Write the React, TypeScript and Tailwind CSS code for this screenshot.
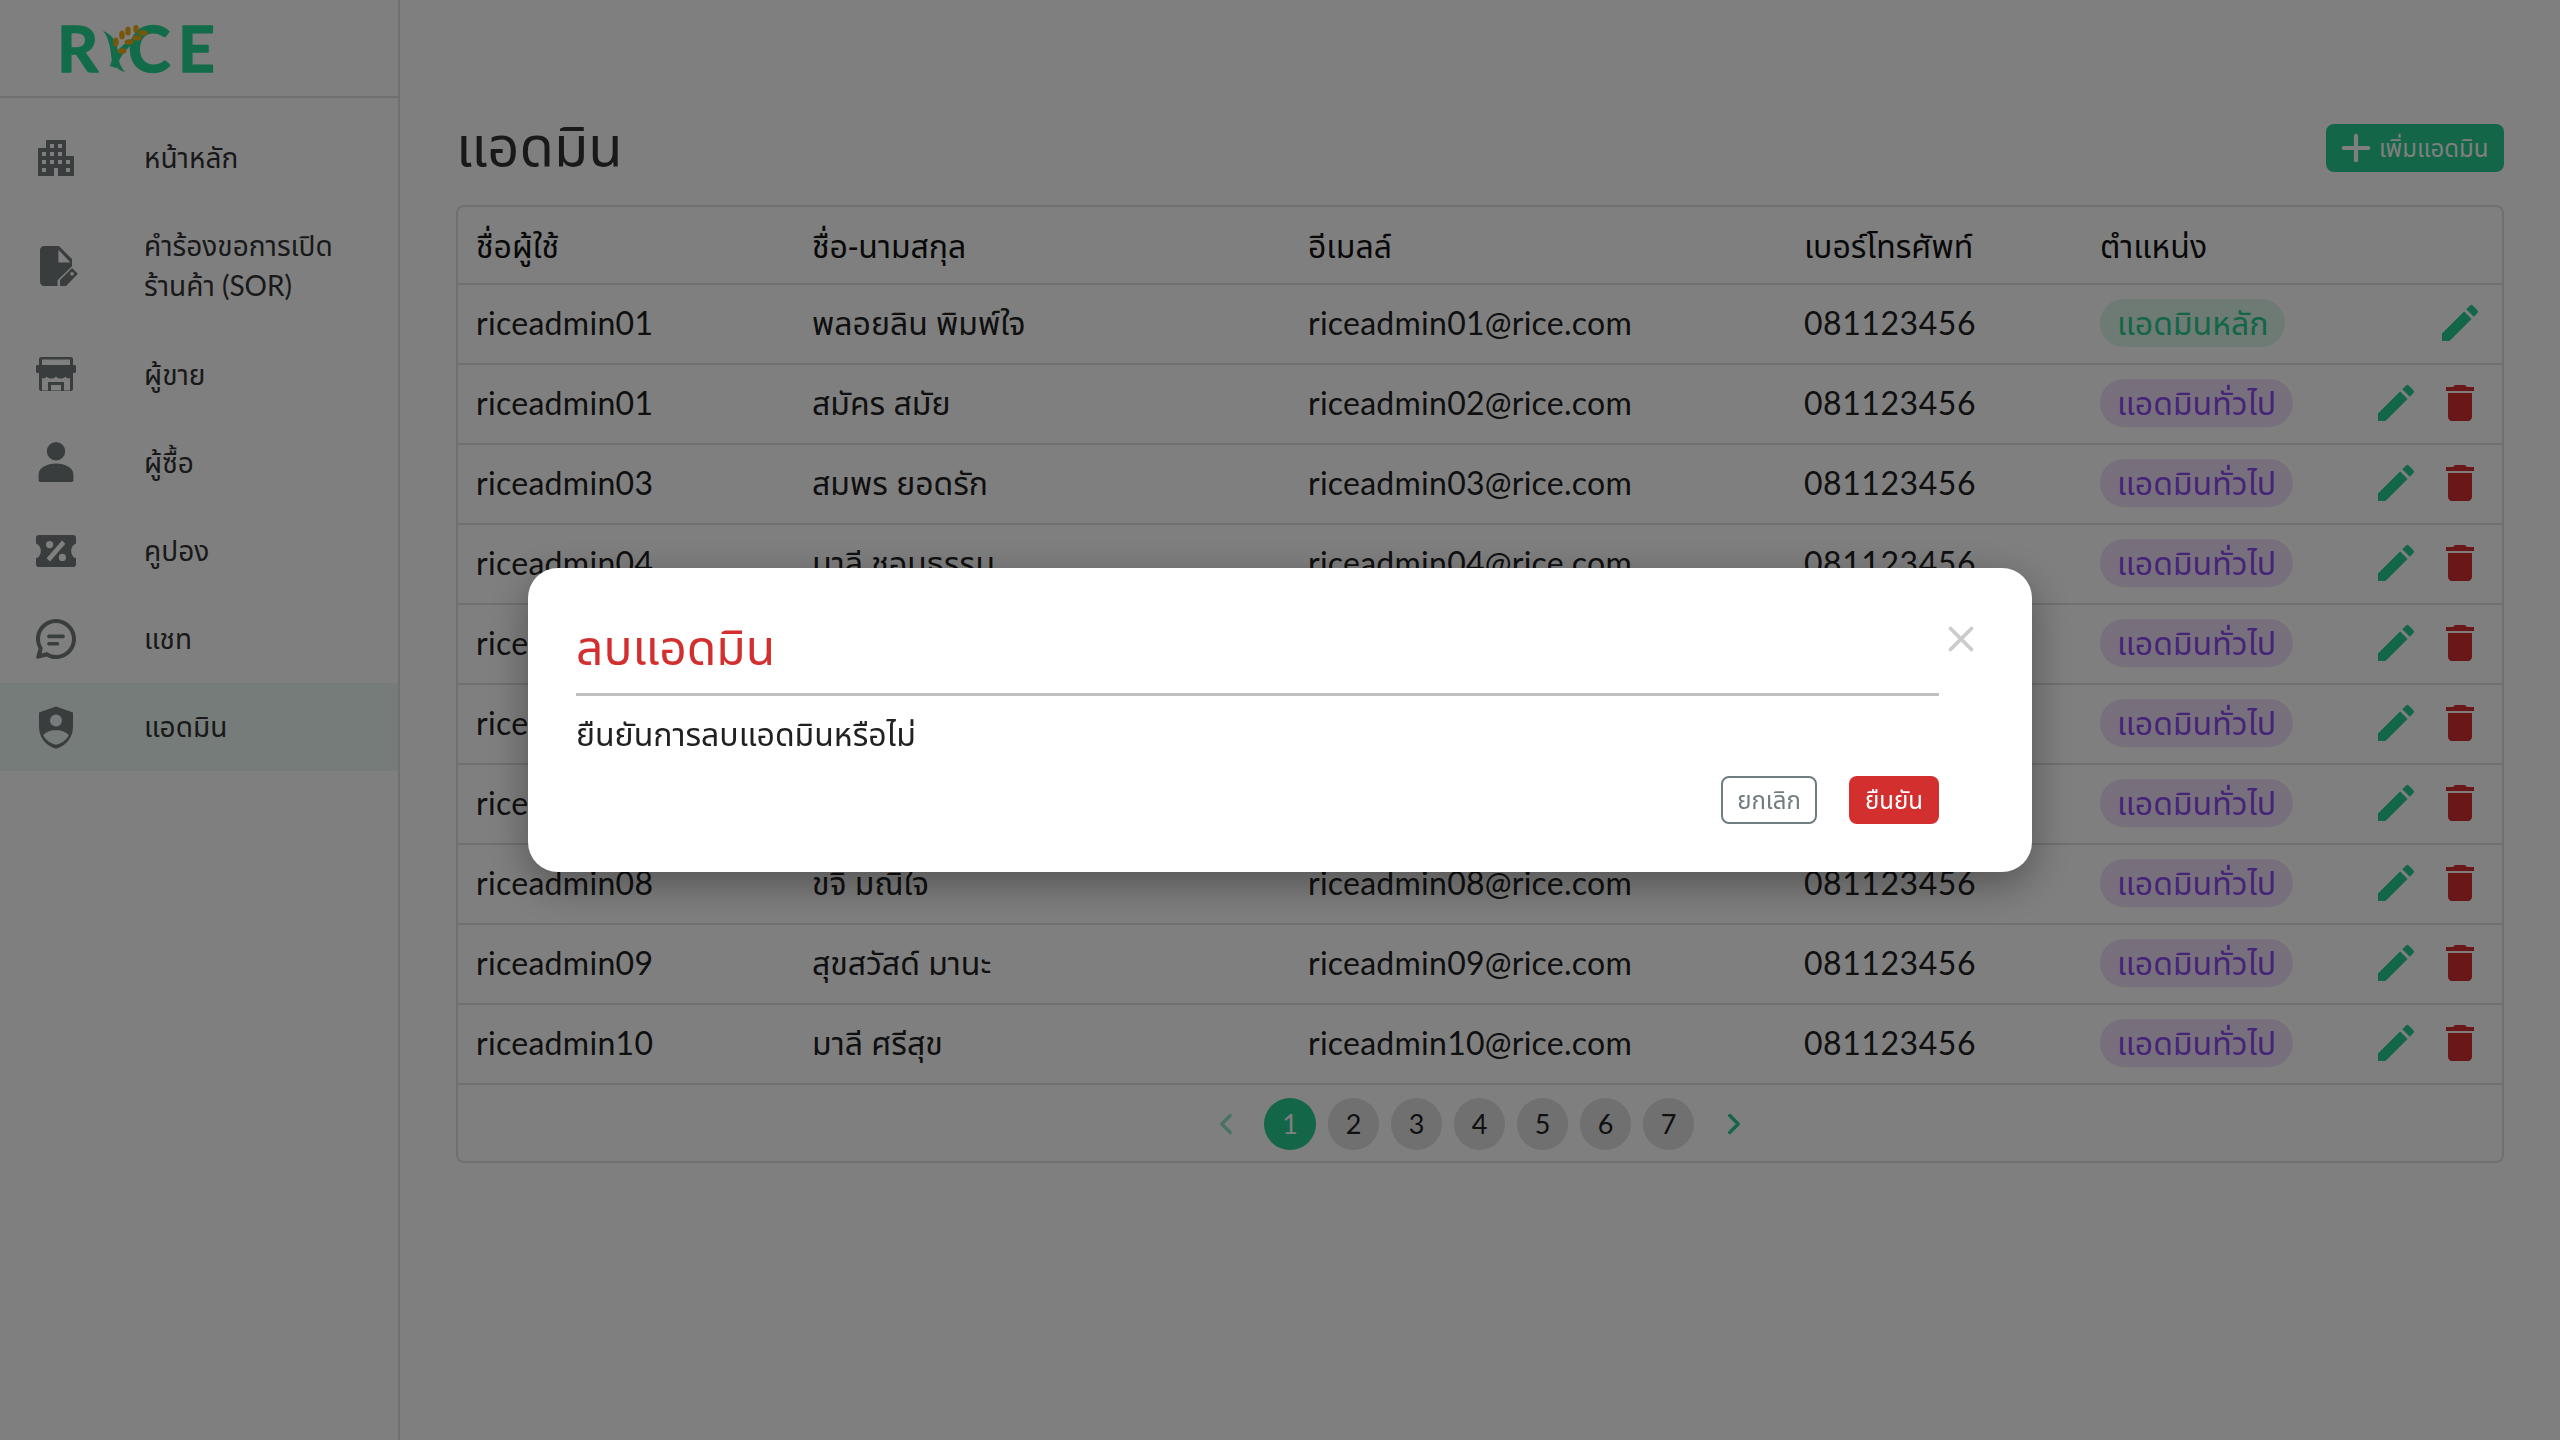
import { Plus, X, ChevronLeft, ChevronRight } from 'lucide-react';

const admins = [
  { user: 'riceadmin01', name: 'พลอยลิน พิมพ์ใจ', email: 'riceadmin01@rice.com', main: true },
  { user: 'riceadmin01', name: 'สมัคร สมัย', email: 'riceadmin02@rice.com' },
  { user: 'riceadmin03', name: 'สมพร ยอดรัก', email: 'riceadmin03@rice.com' },
  { user: 'riceadmin04', name: 'มาลี ชอบธรรม', email: 'riceadmin04@rice.com' },
  { user: 'riceadmin05', name: 'สมชาย ใจดี', email: 'riceadmin05@rice.com' },
  { user: 'riceadmin06', name: 'สมศรี มีสุข', email: 'riceadmin06@rice.com' },
  { user: 'riceadmin07', name: 'วิชัย ยอดดี', email: 'riceadmin07@rice.com' },
  { user: 'riceadmin08', name: 'ขจิ มณิใจ', email: 'riceadmin08@rice.com' },
  { user: 'riceadmin09', name: 'สุขสวัสด์ มานะ', email: 'riceadmin09@rice.com' },
  { user: 'riceadmin10', name: 'มาลี ศรีสุข', email: 'riceadmin10@rice.com' },
];

function Logo() {
  return (
    <svg width="170" height="80" viewBox="0 -14 170 80" className="block">
      <g fontFamily="Lato, sans-serif" fontWeight="700" fontSize="64" fill="#26d892" stroke="#26d892" strokeWidth="1.500" strokeLinejoin="round">
        <text x="1" y="52">R</text>
        <text x="72" y="52">C</text>
        <text x="122" y="52">E</text>
      </g>
      <path d="M47 11C56 14 61 22 62 32c0 8 2 14 7 20-9-2-14-10-14-18-1-9-3-17-8-23z" fill="#26d892" />
      <path d="M54 46C58 30 72 18 92 12 78 22 66 30 60 48z" fill="#26d892" />
      <g fill="#f0ac14">
        <ellipse cx="60" cy="22" rx="2.800" ry="4.500" />
        <ellipse cx="66" cy="15" rx="2.800" ry="4.500" />
        <ellipse cx="72" cy="11" rx="2.800" ry="4.500" />
        <ellipse cx="80" cy="9" rx="2.800" ry="4" />
        <ellipse cx="87" cy="13" rx="4.500" ry="2.800" />
        <ellipse cx="81" cy="18" rx="4.500" ry="2.800" />
        <ellipse cx="73" cy="22" rx="4.500" ry="2.800" />
        <ellipse cx="66" cy="31" rx="4.500" ry="2.800" />
      </g>
    </svg>
  );
}

function MuiIcon({ d, className }: { d: string; className?: string }) {
  return (
    <svg viewBox="0 0 24 24" className={className} fill="currentColor" fillRule="evenodd">
      <path d={d} />
    </svg>
  );
}

const icons = {
  home: 'M17 11V3H7v4H3v14h8v-4h2v4h8V11h-4zM7 19H5v-2h2v2zm0-4H5v-2h2v2zm0-4H5V9h2v2zm4 4H9v-2h2v2zm0-4H9V9h2v2zm0-4H9V5h2v2zm4 8h-2v-2h2v2zm0-4h-2V9h2v2zm0-4h-2V5h2v2zm4 12h-2v-2h2v2zm0-4h-2v-2h2v2z',
  note: 'M6 1.500h7.500L20 8v3.600l-7.200 7V21.500H6c-1.100 0-2-.9-2-2v-16c0-1.100.9-2 2-2zM13.200 3.400V9.800h6zM14 18.500l5.500-5.500c.3-.3.700-.3 1 0l2 1.900c.3.3.3.700 0 1L17 21.500h-2.500c-.3 0-.5-.2-.5-.5zM20 14.500a.9.9 0 1 0 .01 0z',
  store: 'M4.500 3h15c.5 0 1 .5 1 1v3h.8c.4 0 .7.300.7.700v2.600c0 .4-.3.700-.7.700h-.8v8c0 .5-.5 1-1 1h-15c-.5 0-1-.5-1-1v-8h-.8c-.4 0-.7-.3-.7-.7V7.700c0-.4.300-.7.700-.7h.8V4c0-.5.5-1 1-1zM5 4.300V7h14V4.300zM5 13.500V19.700h3v-4.200h8v4.200h3V13.500c-1.200.300-2-.2-2.300-.8-.5.8-1.500 1-2.300 1-1 0-1.800-.3-2.400-1-.6.700-1.400 1-2.400 1-.8 0-1.800-.2-2.300-1-.3.600-1.100 1.100-2.300.8zM9.500 17v2.700h5V17z',
  person: 'M12 1.500a4.600 4.600 0 1 0 0 9.200 4.600 4.600 0 0 0 0-9.200zM12 12.300c-4.500 0-8.700 2-8.700 5.500v3c0 .4.300.7.7.7h16c.4 0 .7-.3.7-.7v-3c0-3.500-4.200-5.500-8.700-5.500z',
  coupon: 'M3.300 4h17.400c.7 0 1.300.6 1.300 1.300v3.100c-1.600.4-2.400 1.900-2.400 3.600s.8 3.200 2.400 3.600v3.100c0 .7-.6 1.300-1.300 1.300H3.300C2.600 20 2 19.400 2 18.700v-3.100c1.600-.4 2.400-1.900 2.400-3.600S3.600 8.800 2 8.400V5.300C2 4.600 2.600 4 3.300 4zM15 6.700L7.300 15.600l1.700 1.700L16.700 8.400zM8.800 7a1.800 1.800 0 1 0 0 3.600 1.800 1.800 0 0 0 0-3.600zm6.400 6.400a1.800 1.800 0 1 0 0 3.600 1.800 1.800 0 0 0 0-3.600z',
  chat: 'M12 2c5.500 0 10 4.500 10 10s-4.500 10-10 10c-1.800 0-3.400-.5-4.800-1.300L3 21.900c-.6.100-1-.4-.9-1L3.300 16.800C2.500 15.400 2 13.800 2 12 2 6.500 6.500 2 12 2zm0 2c-4.400 0-8 3.600-8 8 0 1.700.5 3.200 1.400 4.500l-.6 2.700 2.700-.7C8.800 19.400 10.300 20 12 20c4.400 0 8-3.600 8-8s-3.600-8-8-8zM8.500 9.800h7c.5 0 .9.400.9.900s-.4.900-.9.900h-7c-.5 0-.9-.4-.9-.9s.4-.9.9-.9zm0 3.700h4.200c.5 0 .9.400.9.900s-.4.900-.9.900H8.500c-.5 0-.9-.4-.9-.9s.4-.9.900-.9z',
  shield: 'M12 1.700l8.500 3v7.300c0 5.300-3.600 9.600-8.500 10.900C7.100 21.600 3.500 17.300 3.500 12V4.700zM12 5.800a3 3 0 1 0 0 6 3 3 0 0 0 0-6zm0 7.800c-3 0-5.400 1-6.400 2.600C7 18.500 9.300 20.200 12 20.900c2.700-.7 5-2.400 6.400-4.700-1-1.600-3.400-2.600-6.400-2.600z',
  edit: 'M3 17.250V21h3.750L17.810 9.940l-3.750-3.750L3 17.250zM20.710 7.040c.39-.39.39-1.020 0-1.410l-2.340-2.340a.9959.9959 0 0 0-1.410 0l-1.830 1.830 3.750 3.750 1.830-1.830z',
  trash: 'M6 19c0 1.100.9 2 2 2h8c1.100 0 2-.9 2-2V7H6v12zM19 4h-3.500l-1-1h-5l-1 1H5v2h14V4z',
};

const navItems = [
  { icon: icons.home, label: 'หน้าหลัก' },
  { icon: icons.note, label: 'คำร้องขอการเปิด ร้านค้า', latin: ' (SOR)', tall: true },
  { icon: icons.store, label: 'ผู้ขาย' },
  { icon: icons.person, label: 'ผู้ซื้อ' },
  { icon: icons.coupon, label: 'คูปอง' },
  { icon: icons.chat, label: 'แชท' },
  { icon: icons.shield, label: 'แอดมิน', active: true },
];

function Sidebar() {
  return (
    <aside className="w-[400px] shrink-0 border-r-2 border-[#e0e0e0] bg-white">
      <div className="flex h-[98px] items-start border-b-2 border-[#e0e0e0] pl-[56px] pt-[6px]">
        <Logo />
      </div>
      <nav className="pt-[16px]">
        {navItems.map((item) => (
          <div
            key={item.label}
            className={`flex items-center pl-[32px] ${item.tall ? 'h-[129px]' : 'h-[88px]'} ${item.active ? 'bg-[#ecf8f4]' : ''}`}
          >
            <MuiIcon d={item.icon} className="h-[48px] w-[48px] shrink-0 text-[#747b7d]" />
            <span className="ml-[64px] w-[230px] pb-[3px] text-[28px] leading-[40px] text-[#333333]">
              {item.label}
              {item.latin && <span className="font-['Lato',sans-serif]">{item.latin}</span>}
            </span>
          </div>
        ))}
      </nav>
    </aside>
  );
}

function AdminRow({ admin }: { admin: (typeof admins)[number] }) {
  return (
    <div className="grid h-[80px] grid-cols-[336px_496px_496px_296px_1fr] items-center border-t-2 border-[#e0e0e0] pb-[2px] text-[32px] text-[#212121]">
      <div className="pl-[18px] font-['Lato',sans-serif] tracking-[0.3px]">{admin.user}</div>
      <div className="pl-[18px]">{admin.name}</div>
      <div className="pl-[18px] font-['Lato',sans-serif] tracking-[0.25px]">{admin.email}</div>
      <div className="pl-[18px] font-['Lato',sans-serif] tracking-[0.55px]">081123456</div>
      <div className="flex items-center justify-between pl-[18px] pr-[18px]">
        {admin.main ? (
          <span className="rounded-full bg-[#dcf5e9] px-[17px] py-[4px] leading-[40px] text-[#26cc8e]">แอดมินหลัก</span>
        ) : (
          <span className="rounded-full bg-[#f0dff8] px-[17px] py-[4px] leading-[40px] text-[#8c48f0]">แอดมินทั่วไป</span>
        )}
        <div className="flex items-center gap-[16px]">
          <MuiIcon d={icons.edit} className="h-[48px] w-[48px] text-[#26cc8e]" />
          {!admin.main && <MuiIcon d={icons.trash} className="h-[48px] w-[48px] text-[#d32f2f]" />}
        </div>
      </div>
    </div>
  );
}

function Pagination() {
  return (
    <div className="flex h-[78px] items-center justify-center border-t-2 border-[#e0e0e0] pt-[2px] font-['Lato',sans-serif]">
      <ChevronLeft className="mr-[21px] h-[34px] w-[34px] text-[#26cc8e] opacity-50" strokeWidth={2.4} />
      <div className="flex gap-[12px]">
        {[1, 2, 3, 4, 5, 6, 7].map((n) => (
          <div
            key={n}
            className={`flex h-[52px] items-center justify-center rounded-full text-[27px] ${n === 1 ? 'w-[52px] bg-[#26cc8e] text-white' : 'w-[51px] bg-[#e0e0e0] text-[#212121]'}`}
          >
            {n}
          </div>
        ))}
      </div>
      <ChevronRight className="ml-[23px] h-[34px] w-[34px] text-[#26cc8e]" strokeWidth={2.4} />
    </div>
  );
}

function ConfirmModal() {
  return (
    <div className="fixed inset-0 z-10 flex items-center justify-center bg-black/50">
      <div className="flex h-[304px] w-[1504px] rounded-[30px] bg-white pb-[48px] pl-[48px] pr-[10px] pt-[47px] shadow-[0_12px_40px_rgba(0,0,0,0.35)]">
        <div className="flex w-[1363px] flex-col">
          <h2 className="mt-[2px] h-[53px] text-[48px] leading-[60px] text-[#d32f2f]">ลบแอดมิน</h2>
          <div className="mt-[23px] h-[3px] bg-[#c0c0c0]" />
          <p className="mt-[14px] text-[32px] leading-[48px] text-[#212121]">ยืนยันการลบแอดมินหรือไม่</p>
          <div className="mt-auto flex justify-end gap-[32px]">
            <button className="h-[48px] w-[96px] rounded-[8px] border-2 border-[#6f7d80] text-[24px] text-[#6f7d80]">ยกเลิก</button>
            <button className="h-[48px] w-[90px] rounded-[8px] bg-[#d32f2f] text-[24px] text-white">ยืนยัน</button>
          </div>
        </div>
        <X className="ml-[1px] mt-[3px] h-[42px] w-[42px] text-[#cccccc]" strokeWidth={2.2} />
      </div>
    </div>
  );
}

export default function App() {
  return (
    <div className="flex h-[1440px] bg-white font-['Noto_Sans','Noto_Sans_Thai',sans-serif]">
      <Sidebar />
      <main className="flex-1 pl-[56px] pr-[56px] pt-[116px]">
        <div className="flex h-[89px] items-start justify-between">
          <h1 className="text-[56px] leading-[56px] text-[#333333]">แอดมิน</h1>
          <button className="mt-[8px] flex h-[48px] w-[178px] items-center gap-[2px] rounded-[8px] bg-[#26cc8e] pl-[9px] text-[24px] text-white">
            <Plus className="h-[42px] w-[42px]" strokeWidth={2.4} />
            เพิ่มแอดมิน
          </button>
        </div>
        <section className="overflow-hidden rounded-[8px] border-2 border-[#e0e0e0]">
          <div className="grid h-[76px] grid-cols-[336px_496px_496px_296px_1fr] items-center pt-[2px] text-[32px] text-[#111111]">
            <div className="pl-[18px]">ชื่อผู้ใช้</div>
            <div className="pl-[18px]">ชื่อ-นามสกุล</div>
            <div className="pl-[18px]">อีเมลล์</div>
            <div className="pl-[18px]">เบอร์โทรศัพท์</div>
            <div className="pl-[18px]">ตำแหน่ง</div>
          </div>
          {admins.map((a) => (
            <AdminRow key={a.email} admin={a} />
          ))}
          <Pagination />
        </section>
      </main>
      <ConfirmModal />
    </div>
  );
}
